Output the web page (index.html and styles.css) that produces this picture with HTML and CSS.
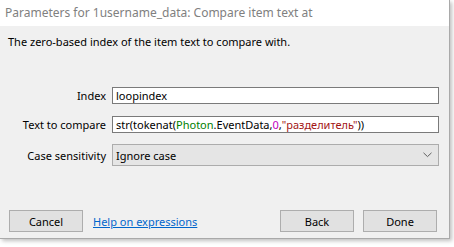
FILE: index.html
```html
<!DOCTYPE html>
<html lang="en">
<head>
  <meta charset="UTF-8"><title>Parameters</title>
  <link rel="stylesheet" href="styles.css">
</head>
<body>
  <div class="window">
    <div class="titlebar">Parameters for 1username_data: Compare item text at</div>
    <div class="dialog">
      <p class="desc">The zero-based index of the item text to compare with.</p>

      <div class="fields">
        <label class="lbl">Index</label>
        <div class="input">loopindex</div>

        <label class="lbl">Text to compare</label>
        <div class="input">str(tokenat(<span class="obj">Photon</span>.EventData,<span class="num">0</span>,<span class="str">"разделитель"</span>))</div>

        <label class="lbl">Case sensitivity</label>
        <div class="select">
          <span>Ignore case</span>
          <svg class="chev" width="9" height="6" viewBox="0 0 9 6"><path d="M.5 .8 4.5 4.6 8.5 .8" fill="none" stroke="#606060" stroke-width="1"/></svg>
        </div>
      </div>

      <div class="footer">
        <button class="btn">Cancel</button>
        <a class="help" href="#">Help on expressions</a>
        <span class="spacer"></span>
        <button class="btn">Back</button>
        <button class="btn">Done</button>
      </div>
    </div>
  </div>
</body>
</html>
```

FILE: styles.css
```css
* { margin:0; padding:0; box-sizing:border-box; }
body { background:#fff; font-family:'Noto Sans','DejaVu Sans',sans-serif; font-size:11px; color:#000; width:454px; height:247px; overflow:hidden; }

/* Window frame */
.window { width:450px; height:239px; border-right:1px solid #a9a9a9; border-bottom:1px solid #a9a9a9;
  box-shadow:2px 2px 4px rgba(0,0,0,.25); display:flex; flex-direction:column; }
.titlebar { height:26px; background:#fff; color:#808080; font-size:12px; line-height:26px; padding-left:5px; }

/* Dialog body */
.dialog { flex:1; background:#f0f0f0; padding:8px 0 6px; display:flex; flex-direction:column; }
.desc { padding-left:8px; line-height:16px; }

.fields { display:grid; grid-template-columns:106px 327px; column-gap:6px; row-gap:12px; margin-top:37px; align-items:center; }
.lbl { text-align:right; }
.input { height:17px; background:#fff; border:1px solid #7a7a7a; line-height:15px; padding-left:3px; white-space:nowrap; overflow:hidden; }
.input .obj { color:#008000; }
.input .num { color:#c000c0; }
.input .str { color:#a31515; }
.select { height:22px; background:#e5e5e5; border:1px solid #acacac; display:flex; align-items:center; justify-content:space-between; padding:0 6px 0 3px; margin-top:-1px; }

/* Footer buttons */
.footer { margin-top:auto; display:flex; align-items:center; padding:0 12px 0 9px; }
.btn { width:74px; height:22px; background:#e1e1e1; border:1px solid #adadad; font:inherit; color:#000; }
.btn + .btn { margin-left:9px; }
.help { margin-left:10px; color:#0066cc; }
.spacer { flex:1; }
```
